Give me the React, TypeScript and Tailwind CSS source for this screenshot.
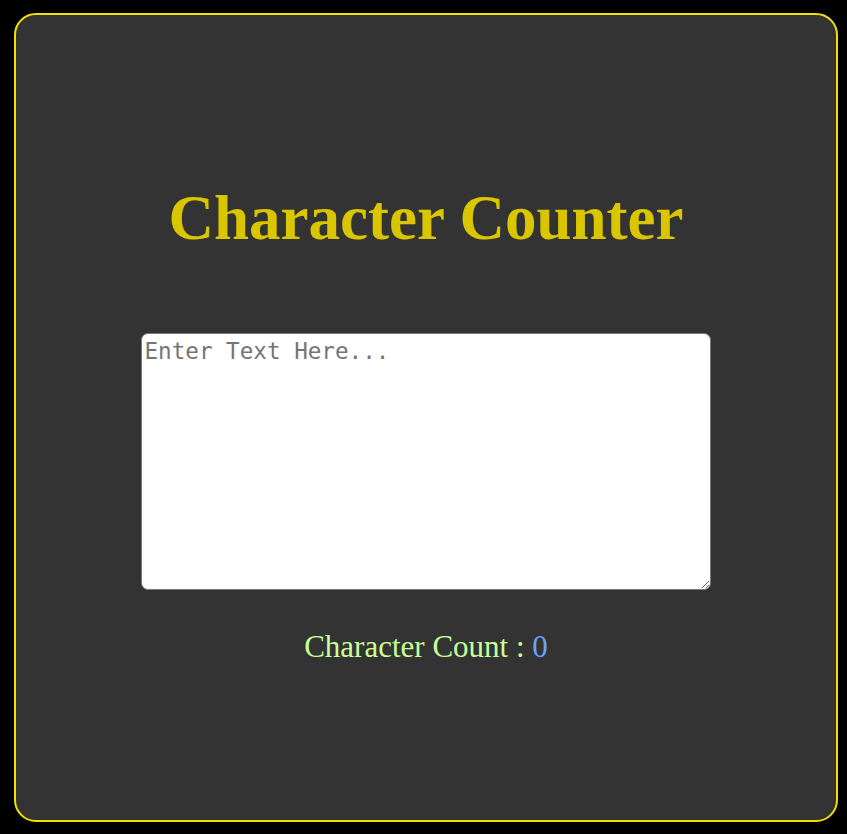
import { useState } from "react"

export default function App() {
  const [text, setText] = useState("")

  return (
    <div className="min-h-screen w-full bg-black pt-[13px] pl-[14px] pr-[9px] pb-[12px]">
      <div className="flex h-[809px] w-[824px] flex-col items-center rounded-[22px] border-2 border-[#f2e000] bg-[#333333] pt-[172px]">
        <h1 className="font-['Liberation_Serif',serif] text-[63px] font-bold leading-none text-[#d9c600]">
          Character Counter
        </h1>
        <textarea
          value={text}
          onChange={(e) => setText(e.target.value)}
          placeholder="Enter Text Here..."
          className="mt-[83px] ml-[-1px] h-[257px] w-[570px] rounded-[7px] border border-[#7a7a7a] bg-white px-[3px] pt-[4px] pb-[3px] font-['DejaVu_Sans_Mono',monospace] text-[22.6px] leading-[1.2] text-black placeholder:text-[#757575] outline-none"
        />
        <p className="mt-[41px] font-['Liberation_Serif',serif] text-[31px] leading-none text-[#c8ff9b]">
          Character Count : <span className="text-[#6ea2ff]">{text.length}</span>
        </p>
      </div>
    </div>
  )
}
